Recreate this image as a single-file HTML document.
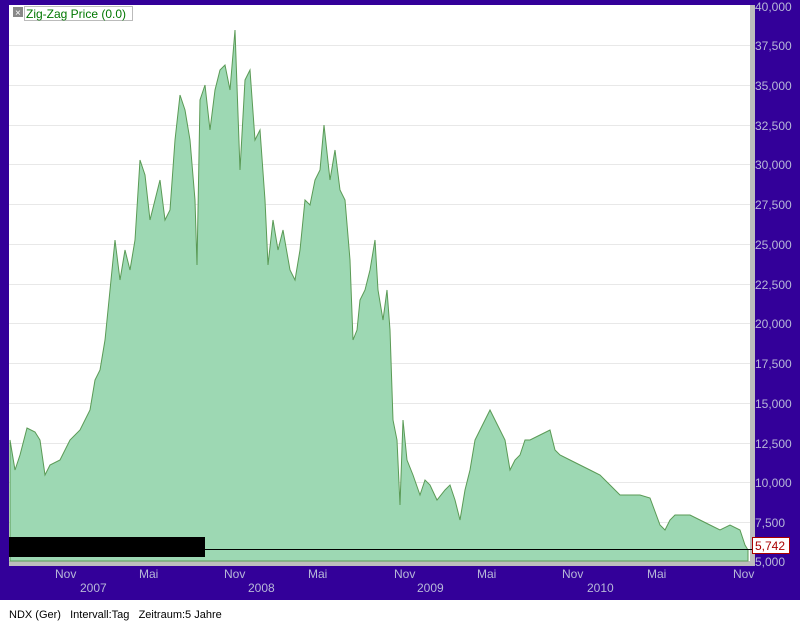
<!DOCTYPE html>
<html><head><meta charset="utf-8"><style>
body{margin:0;width:800px;height:625px;background:#fff;font-family:"Liberation Sans",sans-serif;overflow:hidden;position:relative}
#p{position:absolute;left:0;top:0;width:800px;height:600px;background:#330099}
.yl{position:absolute;left:755px;font-size:12px;color:#b8b8d8}
.xl{position:absolute;font-size:12px;color:#b8b8d8}
</style></head><body>
<div id="p"></div>
<svg style="position:absolute;left:0;top:0" width="800" height="600">
<rect x="9" y="5" width="746" height="561" fill="#bdbdbd"/>
<rect x="9" y="5" width="741" height="556" fill="#fff"/>
<g stroke="#e8e8e8" stroke-width="1">
<line x1="9" x2="750" y1="45.5" y2="45.5"/><line x1="9" x2="750" y1="85.5" y2="85.5"/><line x1="9" x2="750" y1="125.5" y2="125.5"/><line x1="9" x2="750" y1="164.5" y2="164.5"/><line x1="9" x2="750" y1="204.5" y2="204.5"/><line x1="9" x2="750" y1="244.5" y2="244.5"/><line x1="9" x2="750" y1="284.5" y2="284.5"/><line x1="9" x2="750" y1="323.5" y2="323.5"/><line x1="9" x2="750" y1="363.5" y2="363.5"/><line x1="9" x2="750" y1="403.5" y2="403.5"/><line x1="9" x2="750" y1="443.5" y2="443.5"/><line x1="9" x2="750" y1="482.5" y2="482.5"/><line x1="9" x2="750" y1="522.5" y2="522.5"/>
</g>
<polygon fill="#9dd8b3" stroke="#5a9a55" stroke-width="1" points="10,561 10,440 15,470 20,455 27,428 35,432 40,440 45,475 50,465 60,460 70,440 80,430 90,410 95,380 100,370 105,340 110,290 115,240 120,280 125,250 130,270 135,240 140,160 145,175 150,220 155,200 160,180 165,220 170,210 175,140 180,95 185,110 190,140 195,200 197,265 200,100 205,85 210,130 215,90 220,70 225,65 230,90 235,30 240,170 245,80 250,70 255,140 260,130 265,200 268,265 273,220 278,250 283,230 290,270 295,280 300,250 305,200 310,205 315,180 320,170 324,125 330,180 335,150 340,190 345,200 350,260 353,340 357,330 360,300 365,290 370,270 375,240 378,290 383,320 387,290 390,330 393,420 397,440 400,505 403,420 407,460 413,475 420,495 425,480 430,485 437,500 445,490 450,485 455,500 460,520 465,490 470,470 475,440 480,430 485,420 490,410 495,420 500,430 505,440 510,470 515,460 520,455 525,440 530,440 540,435 550,430 555,450 560,455 570,460 580,465 590,470 600,475 610,485 620,495 630,495 640,495 650,498 660,525 665,530 670,520 675,515 680,515 690,515 700,520 710,525 720,530 730,525 740,530 745,545 748,550 748,561"/>
<line x1="9" x2="752" y1="549.5" y2="549.5" stroke="#000"/>
<rect x="9" y="537" width="196" height="20" fill="#000"/>
<rect x="752.5" y="537.5" width="37" height="16" fill="#fff" stroke="#aa0000"/>
<text x="755" y="550" font-size="12" fill="#aa0000" font-family="Liberation Sans">5,742</text>
<rect x="13" y="7" width="10" height="10" fill="#888"/>
<text x="15" y="16" font-size="10" fill="#fff">×</text>
<rect x="24.5" y="6.5" width="108" height="14" fill="#fff" stroke="#bbb"/>
<text x="26" y="18" font-size="12" fill="#007700" font-family="Liberation Sans">Zig-Zag Price (0.0)</text>
</svg>
<div class="yl" style="top:0">40,000</div><div class="yl" style="top:39px">37,500</div><div class="yl" style="top:79px">35,000</div><div class="yl" style="top:119px">32,500</div><div class="yl" style="top:158px">30,000</div><div class="yl" style="top:198px">27,500</div><div class="yl" style="top:238px">25,000</div><div class="yl" style="top:278px">22,500</div><div class="yl" style="top:317px">20,000</div><div class="yl" style="top:357px">17,500</div><div class="yl" style="top:397px">15,000</div><div class="yl" style="top:437px">12,500</div><div class="yl" style="top:476px">10,000</div><div class="yl" style="top:516px">7,500</div><div class="yl" style="top:555px">5,000</div>
<div class="xl" style="left:55px;top:567px">Nov</div><div class="xl" style="left:80px;top:581px">2007</div>
<div class="xl" style="left:139px;top:567px">Mai</div>
<div class="xl" style="left:224px;top:567px">Nov</div><div class="xl" style="left:248px;top:581px">2008</div>
<div class="xl" style="left:308px;top:567px">Mai</div>
<div class="xl" style="left:394px;top:567px">Nov</div><div class="xl" style="left:417px;top:581px">2009</div>
<div class="xl" style="left:477px;top:567px">Mai</div>
<div class="xl" style="left:562px;top:567px">Nov</div><div class="xl" style="left:587px;top:581px">2010</div>
<div class="xl" style="left:647px;top:567px">Mai</div>
<div class="xl" style="left:733px;top:567px">Nov</div>
<div style="position:absolute;left:9px;top:609px;font-size:11px;color:#000">NDX (Ger) &nbsp; Intervall:Tag &nbsp; Zeitraum:5 Jahre</div>
</body></html>
